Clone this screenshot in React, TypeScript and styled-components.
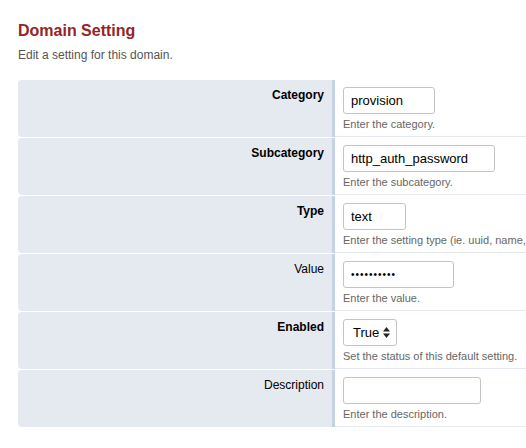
import styled, {createGlobalStyle} from "styled-components";

const GlobalStyle = createGlobalStyle`
  html, body {
    margin: 0;
    padding: 0;
    overflow: hidden;
    background: #ffffff;
  }
  body {
    font-family: "Liberation Sans", Arial, sans-serif;
  }
`;

const Page = styled.div`
  padding: 22px 0 0 18px;
  width: 1060px;
`;

const Title = styled.h1`
  margin: 0;
  font-size: 16px;
  font-weight: bold;
  line-height: 18px;
  color: #952424;
`;

const Intro = styled.p`
  margin: 8px 0 0 0;
  font-size: 12px;
  line-height: 14px;
  color: #555;
`;

const Form = styled.div`
  margin-top: 18px;
  display: grid;
  grid-template-columns: 317px 1fr;
  row-gap: 1px;
`;

const Label = styled.div<{$required?: boolean}>`
  box-sizing: border-box;
  height: 57px;
  background: #e5e9f0;
  border-right: 3px solid #c5d1e5;
  border-radius: 4px 0 0 4px;
  padding: 8px 8px 0 0;
  text-align: right;
  font-size: 12px;
  line-height: 14px;
  color: #000;
  font-weight: ${props => props.$required ? "bold" : "normal"};
`;

const Field = styled.div`
  box-sizing: border-box;
  height: 57px;
  border-bottom: 1px solid #e5e9f0;
  padding: 7px 0 0 8px;
  display: flex;
  flex-direction: column;
  align-items: flex-start;
`;

const Input = styled.input<{$w: number}>`
  box-sizing: border-box;
  width: ${props => props.$w}px;
  height: 27px;
  margin: 0;
  padding: 0 7px;
  border: 1px solid #c4c4c4;
  border-radius: 3px;
  background: #fff;
  font-family: "Liberation Sans", Arial, sans-serif;
  font-size: 13px;
  color: #000;
  outline: none;
  &[type="password"] {
    font-size: 10px;
    letter-spacing: 1px;
  }
`;

const SelectWrap = styled.div`
  position: relative;
  width: 54px;
  height: 27px;
`;

const Select = styled.select`
  box-sizing: border-box;
  width: 54px;
  height: 27px;
  margin: 0;
  padding: 0 0 0 9px;
  border: 1px solid #c4c4c4;
  border-radius: 3px;
  background: #fff;
  appearance: none;
  -webkit-appearance: none;
  font-family: "Liberation Sans", Arial, sans-serif;
  font-size: 13px;
  color: #000;
  outline: none;
`;

const Arrows = styled.svg`
  position: absolute;
  right: 7px;
  top: 8px;
  pointer-events: none;
`;

const Hint = styled.span`
  margin-top: 4px;
  font-size: 11px;
  line-height: 13px;
  color: #666;
  white-space: nowrap;
`;

interface IRow {
    label: string,
    required: boolean,
    hint: string,
    value?: string,
    width?: number,
    password?: boolean,
    select?: boolean
}

const rows: IRow[] = [
    {label: "Category", required: true, value: "provision", width: 92, hint: "Enter the category."},
    {label: "Subcategory", required: true, value: "http_auth_password", width: 152, hint: "Enter the subcategory."},
    {label: "Type", required: true, value: "text", width: 63, hint: "Enter the setting type (ie. uuid, name, var, text, array, boolean, numeric)."},
    {label: "Value", required: false, value: "1234567890", width: 111, password: true, hint: "Enter the value."},
    {label: "Enabled", required: true, select: true, hint: "Set the status of this default setting."},
    {label: "Description", required: false, value: "", width: 138, hint: "Enter the description."}
];

function App() {
    return (
        <Page>
            <GlobalStyle/>
            <Title>Domain Setting</Title>
            <Intro>Edit a setting for this domain.</Intro>
            <Form>
                {rows.map(row => (
                    <>
                        <Label key={row.label + "-l"} $required={row.required}>{row.label}</Label>
                        <Field key={row.label + "-f"}>
                            {row.select ? (
                                <SelectWrap>
                                    <Select defaultValue="true">
                                        <option value="true">True</option>
                                        <option value="false">False</option>
                                    </Select>
                                    <Arrows width="7" height="11" viewBox="0 0 7 11">
                                        <path d="M3.5 0 L7 4.5 L0 4.5 Z" fill="#222"/>
                                        <path d="M0 6.5 L7 6.5 L3.5 11 Z" fill="#222"/>
                                    </Arrows>
                                </SelectWrap>
                            ) : (
                                <Input
                                    $w={row.width || 100}
                                    type={row.password ? "password" : "text"}
                                    defaultValue={row.value}
                                />
                            )}
                            <Hint>{row.hint}</Hint>
                        </Field>
                    </>
                ))}
            </Form>
        </Page>
    );
}

export default App;
